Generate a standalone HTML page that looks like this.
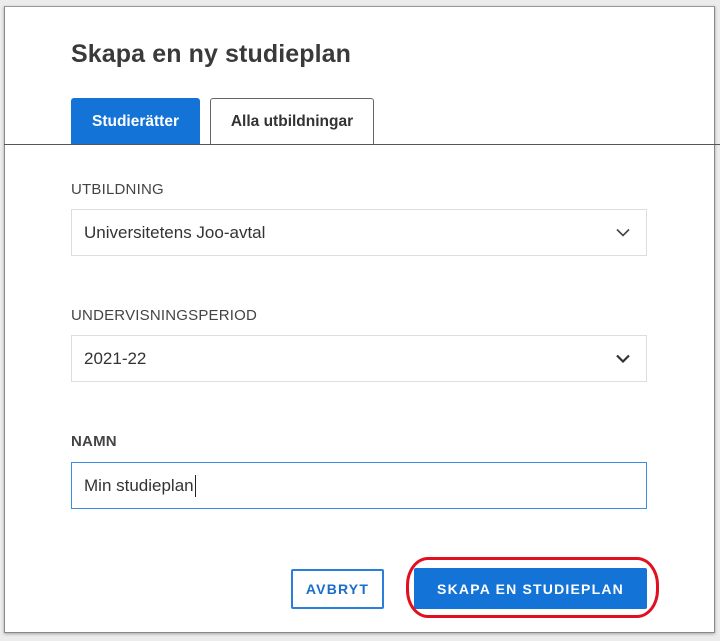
<!DOCTYPE html>
<html><head><meta charset="utf-8"><style>
*{box-sizing:border-box;margin:0;padding:0}
body{width:720px;height:641px;background:#ececec;font-family:"Liberation Sans",sans-serif;color:#333;position:relative;overflow:hidden}
.dlg{position:absolute;left:4px;top:6px;width:711px;height:627px;background:#fff;border:1px solid #888;border-top:1px solid #999;box-shadow:0 1px 3px rgba(0,0,0,.3)}
.a{position:absolute}
h1{position:absolute;left:71px;top:40px;font-size:25px;font-weight:bold;color:#3a3a3a;letter-spacing:0.1px}
.tab{position:absolute;top:98px;height:47px;font-size:15.5px;font-weight:bold;display:flex;align-items:center;justify-content:center;border-radius:3px 3px 0 0}
.line{position:absolute;left:4px;right:0;top:144px;height:1px;background:#555}
.lbl{position:absolute;left:71px;font-size:15px;color:#444;letter-spacing:0.2px}
.sel{position:absolute;left:71px;width:576px;height:47px;border:1px solid #ddd;font-size:17px;color:#333;padding-left:12px;display:flex;align-items:center}
.sel svg{position:absolute;right:16px;top:18px}
.btn{position:absolute;font-size:14px;font-weight:bold;letter-spacing:1.2px;display:flex;align-items:center;justify-content:center;border-radius:2px}
</style></head><body>
<div class="dlg"></div>
<h1>Skapa en ny studieplan</h1>
<div class="tab" style="left:71px;width:129px;background:#1473d6;color:#fff">Studierätter</div>
<div class="tab" style="left:210px;width:164px;background:#fff;border:1px solid #666;border-bottom:none;color:#333">Alla utbildningar</div>
<div class="line"></div>
<div class="lbl" style="top:181px">UTBILDNING</div>
<div class="sel" style="top:209px">Universitetens Joo-avtal<svg width="14" height="9" viewBox="0 0 14 9"><path d="M1 1.5l6 6 6-6" fill="none" stroke="#444" stroke-width="1.6"/></svg></div>
<div class="lbl" style="top:307px">UNDERVISNINGSPERIOD</div>
<div class="sel" style="top:335px">2021-22<svg width="14" height="9" viewBox="0 0 14 9"><path d="M1 1.5l6 6 6-6" fill="none" stroke="#333" stroke-width="2.2"/></svg></div>
<div class="lbl" style="top:433px;font-weight:bold;color:#444">NAMN</div>
<div class="sel" style="top:462px;border-color:#3a8de0">Min studieplan<span style="display:inline-block;width:1px;height:22px;background:#222;margin-left:1px"></span></div>
<div class="btn" style="left:291px;top:569px;width:93px;height:40px;border:2px solid #2a7fd9;color:#1a6dc8">AVBRYT</div>
<div class="btn" style="left:414px;top:568px;width:233px;height:41px;background:#1473d6;color:#fff">SKAPA EN STUDIEPLAN</div>
<div class="a" style="left:406px;top:557px;width:253px;height:61px;border:3px solid #e01020;border-radius:22px/28px"></div>
</body></html>
